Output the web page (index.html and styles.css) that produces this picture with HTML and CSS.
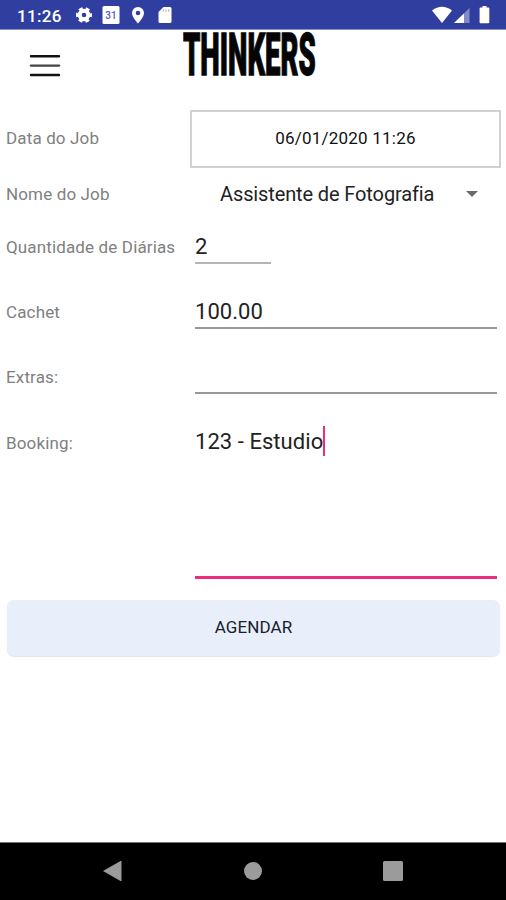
FILE: index.html
```html
<!DOCTYPE html>
<html lang="pt-BR">
<head>
<meta charset="utf-8">
<title>Thinkers</title>
<link rel="stylesheet" href="styles.css">
</head>
<body>
<div class="status">
  <span class="clock">11:26</span>
  <svg class="icons-left" width="98" height="20" viewBox="0 0 98 20" fill="#fff">
    <circle cx="9" cy="10" r="4.3" fill="none" stroke="#fff" stroke-width="4"/>
    <circle cx="9" cy="10" r="6.6" fill="none" stroke="#fff" stroke-width="2.800" stroke-dasharray="3.910 3" stroke-dashoffset="1.950"/>
    <rect x="27.500" y="1" width="17" height="18" rx="1.500"/>
    <text class="day" x="36" y="14" text-anchor="middle">31</text>
    <path fill-rule="evenodd" d="M63 2a6 6 0 0 0-6 6c0 4.300 6 10.500 6 10.500S69 12.300 69 8a6 6 0 0 0-6-6zm0 3.700a2.300 2.300 0 1 1 0 4.600 2.300 2.300 0 0 1 0-4.600z"/>
    <path d="M88.500 2H95q1.500 0 1.500 1.500v13q0 1.500-1.500 1.500H85q-1.500 0-1.500-1.500V7z"/>
    <path d="M88.300 4.500v2M91 4.500v2M93.700 4.500v2" stroke="#8d96cd" stroke-width="1"/>
  </svg>
  <svg class="icons-right" width="60" height="20" viewBox="0 0 60 20" fill="#fff">
    <path d="M0 5.500Q10-2 20 5.500L10 18z"/>
    <path d="M37.500 3v15H22z" opacity=".4"/>
    <path d="M32 8.500V18H22z"/>
    <path d="M48.500 2.500h2V1h4v1.500h2q.8 0 .8.800v14q0 .9-.8.900h-8q-.9 0-.9-.9v-14q0-.8.900-.8z"/>
  </svg>
</div>
<header class="header">
  <svg class="menu" width="32" height="24" viewBox="0 0 32 24" stroke="#111" stroke-width="2.400" stroke-linecap="round"><path d="M2 2.200h28M2 21h28"/><path d="M2 11.600h28" stroke="#444"/></svg>
  <div class="logo"><span>THINKERS</span></div>
</header>
<main class="form">
  <div class="row row-date"><label>Data do Job</label><button class="date">06/01/2020 11:26</button></div>
  <div class="row row-name"><label>Nome do Job</label><div class="select"><span>Assistente de Fotografia</span><i class="caret"></i></div></div>
  <div class="row row-days"><label>Quantidade de Diárias</label><div class="field"><span>2</span></div></div>
  <div class="row row-fee"><label>Cachet</label><div class="field"><span>100.00</span></div></div>
  <div class="row row-extra"><label>Extras:</label><div class="field"></div></div>
  <div class="row row-booking"><label>Booking:</label><div class="field"><span>123 - Estudio</span><i class="cursor"></i></div></div>
  <button class="submit">AGENDAR</button>
</main>
<nav class="nav">
  <svg width="20" height="22" viewBox="0 0 20 22" fill="#9b9b9b"><path d="M0 11 17.500 1q1-.5 1 .6v18.800q0 1.100-1 .6z"/></svg>
  <svg width="18" height="18" viewBox="0 0 18 18" fill="#9b9b9b"><circle cx="9" cy="9" r="9"/></svg>
  <svg width="20" height="20" viewBox="0 0 20 20" fill="#9b9b9b"><rect width="20" height="20" rx="1.500"/></svg>
</nav>
</body>
</html>
```
FILE: styles.css
```css
* { box-sizing: border-box; }
body {
  margin: 0;
  width: 506px;
  height: 900px;
  display: flex;
  flex-direction: column;
  background: #fff;
  font-family: Roboto, sans-serif;
  color: #222;
  overflow: hidden;
}
button { font-family: inherit; margin: 0; padding: 0; }
.status {
  height: 30px;
  flex: none;
  display: flex;
  align-items: center;
  padding: 1px 14px 0 17px;
  background: #303f9f;
  border-bottom: 1px solid #8790c8;
  color: #fff;
}
.clock { width: 58px; font-size: 17px; font-weight: 500; letter-spacing: .3px; padding-top: 1px; }
.icons-right { margin-left: auto; }
.day { font: 500 10px Roboto, sans-serif; fill: #5562b3; }
.header { height: 80px; flex: none; display: flex; padding-left: 29px; }
.menu { margin-top: 24px; }
.logo { width: 140px; height: 50px; margin-left: 122px; }
.logo span {
  display: inline-block;
  font: 900 60px/50px Roboto, sans-serif;
  letter-spacing: 0;
  color: #050505;
  -webkit-text-stroke: 1.3px #050505;
  transform: scaleX(.459);
  transform-origin: 0 0;
}
.form { flex: 1; }
.row { display: grid; grid-template-columns: 184px 1fr; align-items: center; padding: 0 5px 0 6px; }
label { font-size: 17px; color: #808080; letter-spacing: .14px; white-space: nowrap; padding-bottom: 2px; }
.row-date { height: 58px; }
.row-name { height: 53px; }
.row-days { height: 53px; }
.row-fee { height: 77px; }
.row-extra { height: 54px; }
.row-booking { height: 195px; align-items: start; }
.row-booking label { padding-top: 28px; }
.date { height: 58px; background: #fff; border: 2px solid #d2d2d2; font-size: 17px; color: #111; letter-spacing: .22px; padding-bottom: 2px; }
.select { display: flex; align-items: center; justify-content: space-between; padding: 0 23px 2px 30px; font-size: 20px; letter-spacing: -.12px; }
.caret { border: 6px solid transparent; border-top-color: #6b6b6b; border-bottom: 0; }
.field { align-self: start; margin: 0 4px 0 5px; border-bottom: 2px solid #999; display: flex; align-items: flex-end; font-size: 22px; letter-spacing: .05px; line-height: 26px; padding-bottom: 2px; }
.row-days .field { width: 76px; height: 43px; border-color: #b4b4b4; }
.row-fee .field { height: 55px; }
.row-extra .field { height: 43px; }
.row-booking .field { height: 174px; border-bottom: 3px solid #ec2d7e; align-items: flex-start; padding-top: 21px; }
.row-booking .field span { padding-top: 3px; }
.cursor { width: 2px; height: 30px; background: #ec2d7e; }
.submit { display: block; width: 493px; height: 56px; margin-left: 7px; border: 0; border-radius: 7px; background: #e8effb; box-shadow: 0 1px 1px #e2e5ea; font-size: 17px; letter-spacing: .1px; color: #17202c; padding-bottom: 2px; }
.nav { height: 58px; flex: none; display: flex; justify-content: space-between; align-items: center; padding: 0 103px 2px; background: #000; border-top: 1px solid #777; }
```
